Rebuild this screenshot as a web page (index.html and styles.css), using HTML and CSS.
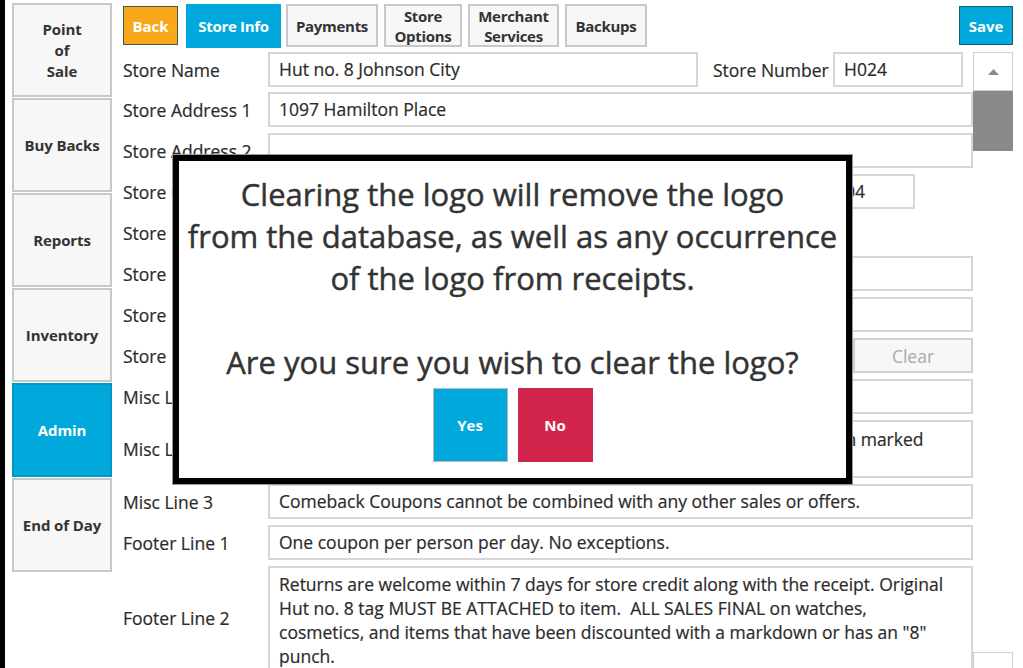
FILE: index.html
```html
<!DOCTYPE html>
<html>
<head>
<meta charset="utf-8">
<link rel="stylesheet" href="styles.css">
</head>
<body>
<div class="app">
  <nav class="sidebar">
    <div class="side-btn">Point<br>of<br>Sale</div>
    <div class="side-btn">Buy Backs</div>
    <div class="side-btn">Reports</div>
    <div class="side-btn">Inventory</div>
    <div class="side-btn active">Admin</div>
    <div class="side-btn">End of Day</div>
  </nav>
  <main class="main">
    <div class="toolbar">
      <div class="btn btn-back">Back</div>
      <div class="tab tab-active t-info">Store Info</div>
      <div class="tab t-pay">Payments</div>
      <div class="tab t-opt">Store<br>Options</div>
      <div class="tab t-merch">Merchant<br>Services</div>
      <div class="tab t-back">Backups</div>
      <div class="spacer"></div>
      <div class="btn btn-save">Save</div>
    </div>
    <div class="content">
      <div class="form">
        <div class="row row-first">
          <div class="label">Store Name</div>
          <div class="input w-name">Hut no. 8 Johnson City</div>
          <div class="label label-inline">Store Number</div>
          <div class="input w-num">H024</div>
        </div>
        <div class="row">
          <div class="label">Store Address 1</div>
          <div class="input grow">1097 Hamilton Place</div>
        </div>
        <div class="row">
          <div class="label">Store Address 2</div>
          <div class="input grow"></div>
        </div>
        <div class="row">
          <div class="label">Store City</div>
          <div class="input w-city">Johnson City</div>
          <div class="input w-zip">37604</div>
        </div>
        <div class="row">
          <div class="label">Store Phone</div>
          <div class="input w-phone">(423) 282-4688</div>
        </div>
        <div class="row">
          <div class="label">Store Email</div>
          <div class="input grow"></div>
        </div>
        <div class="row">
          <div class="label">Store URL</div>
          <div class="input grow"></div>
        </div>
        <div class="row">
          <div class="label">Store Logo</div>
          <div class="input w-logo"></div>
          <div class="btn-clear">Clear</div>
        </div>
        <div class="row">
          <div class="label">Misc Line 1</div>
          <div class="input grow"></div>
        </div>
        <div class="row row-tall">
          <div class="label">Misc Line 2</div>
          <div class="input grow area">Comeback Coupons valid on purchases of $25 on items that have been marked<br>down.</div>
        </div>
        <div class="row">
          <div class="label">Misc Line 3</div>
          <div class="input grow">Comeback Coupons cannot be combined with any other sales or offers.</div>
        </div>
        <div class="row">
          <div class="label">Footer Line 1</div>
          <div class="input grow">One coupon per person per day. No exceptions.</div>
        </div>
        <div class="row row-footer">
          <div class="label">Footer Line 2</div>
          <div class="input grow area area-footer">Returns are welcome within 7 days for store credit along with the receipt. Original<br>Hut no. 8 tag MUST BE ATTACHED to item.&nbsp; ALL SALES FINAL on watches,<br>cosmetics, and items that have been discounted with a markdown or has an "8"<br>punch.</div>
        </div>
      </div>
      <div class="scrollbar">
        <div class="sb-up"><svg width="11" height="6" viewBox="0 0 11 6"><polygon points="0,6 11,6 5.5,0" fill="#8a8a8a"/></svg></div>
        <div class="sb-thumb"></div>
        <div class="sb-track"></div>
        <div class="sb-down"></div>
      </div>
    </div>
  </main>
  <div class="modal">
    <p class="modal-text">Clearing the logo will remove the logo<br>from the database, as well as any occurrence<br>of the logo from receipts.<br><br>Are you sure you wish to clear the logo?</p>
    <div class="modal-actions">
      <div class="mbtn yes">Yes</div>
      <div class="mbtn no">No</div>
    </div>
  </div>
</div>
</body>
</html>
```
FILE: styles.css
```css
* { box-sizing: border-box; }
html, body { margin: 0; padding: 0; background: #fff; }
body {
  font-family: "Open Sans", "Noto Sans", "Liberation Sans", sans-serif;
  color: #2b2b2b;
  width: 1023px;
  height: 668px;
  overflow: hidden;
}
.app {
  position: relative;
  display: flex;
  height: 668px;
  border-left: 5px solid #000;
}
.sidebar {
  display: flex;
  flex-direction: column;
  padding: 3px 0 0 7px;
  width: 118px;
  flex: none;
}
.side-btn {
  width: 100px;
  height: 94px;
  margin-bottom: 1px;
  background: #f7f7f7;
  border: 2px solid #c8c8c8;
  display: flex;
  align-items: center;
  justify-content: center;
  text-align: center;
  font-weight: 700;
  font-size: 15px;
  line-height: 21px;
  color: #333;
  white-space: nowrap;
  letter-spacing: -0.1px;
}
.side-btn.active {
  background: #00a8db;
  border-color: #0097c6;
  color: #fff;
}
.main {
  flex: 1;
  display: flex;
  flex-direction: column;
  padding-right: 10px;
}
.toolbar {
  display: flex;
  align-items: center;
  height: 45px;
  margin-top: 3px;
  gap: 6px;
}
.btn, .tab {
  display: flex;
  align-items: center;
  justify-content: center;
  text-align: center;
  font-weight: 700;
  font-size: 15px;
  line-height: 20px;
  white-space: nowrap;
  flex: none;
}
.btn-back {
  width: 55px;
  height: 39px;
  background: #f9a71b;
  border: 1px solid #3e5d3a;
  color: #fff;
  margin-right: 2px;
}
.btn-save {
  width: 54px;
  height: 39px;
  background: #00a8db;
  border: 1px solid #1c5f6a;
  color: #fff;
}
.tab {
  height: 43px;
  background: #f7f7f7;
  border: 2px solid #c8c8c8;
  color: #333;
  font-size: 15px;
  letter-spacing: -0.3px;
}
.tab-active {
  height: 44px;
  background: #00a8db;
  border-color: #00a8db;
  color: #fff;
  margin-right: -1px;
}
.t-info { width: 95px; }
.t-pay { width: 92px; }
.t-opt { width: 78px; }
.t-merch { width: 91px; }
.t-back { width: 82px; }
.spacer { flex: 1; }
.content {
  display: flex;
  margin-top: 4px;
  flex: 1;
  min-height: 0;
}
.form {
  width: 850px;
  display: flex;
  flex-direction: column;
  gap: 6px;
}
.row {
  display: flex;
  align-items: center;
  height: 35px;
  gap: 10px;
}
.row-first { margin-bottom: -1px; }
.row-tall { height: 58px; }
.row-footer { height: 110px; align-items: flex-start; }
.row-footer .label { align-self: center; margin-top: -6px; }
.label {
  width: 135px;
  flex: none;
  font-size: 17.5px;
  white-space: nowrap;
  color: #2b2b2b;
  -webkit-text-stroke: 0.2px #2b2b2b;
}
.label-inline { width: 110px; margin-left: 5px; }
.input {
  height: 35px;
  border: 2px solid #d6d6d6;
  background: #fff;
  font-size: 17.5px;
  line-height: 24px;
  padding: 3px 9px;
  color: #2b2b2b;
  -webkit-text-stroke: 0.2px #2b2b2b;
  white-space: nowrap;
  overflow: hidden;
  flex: none;
}
.grow { flex: 1; }
.w-name { width: 430px; }
.w-num { width: 130px; }
.w-city { width: 526px; }
.w-zip { width: 111px; }
.w-phone { width: 300px; }
.w-logo { width: 575px; visibility: hidden; }
.area {
  height: 58px;
  align-self: stretch;
  padding-top: 5px;
}
.area-footer {
  height: 110px;
  padding-top: 4px;
}
.btn-clear {
  width: 120px;
  height: 35px;
  border: 2px solid #d0d0d0;
  background: #f7f7f7;
  color: #a9a9a9;
  font-size: 17.5px;
  display: flex;
  align-items: center;
  justify-content: center;
  flex: none;
}
.scrollbar {
  width: 40px;
  display: flex;
  flex-direction: column;
  flex: none;
}
.sb-up {
  height: 39px;
  border: 1px solid #d0d0d0;
  display: flex;
  align-items: center;
  justify-content: center;
}
.sb-thumb {
  height: 60px;
  background: #8a8a8a;
}
.sb-track { flex: 1; }
.sb-down {
  height: 16px;
  border: 1px solid #d0d0d0;
  border-bottom: none;
}
.modal {
  position: absolute;
  left: 168px;
  top: 155px;
  width: 679px;
  height: 329px;
  background: #fff;
  border: 6px solid #000;
  box-shadow: 0 0 0 1px #999;
  display: flex;
  flex-direction: column;
  align-items: center;
  padding-top: 12px;
}
.modal-text {
  margin: 0;
  text-align: center;
  font-size: 31px;
  line-height: 42px;
  color: #333;
  -webkit-text-stroke: 0.45px #333;
  white-space: nowrap;
}
.modal-actions {
  display: flex;
  gap: 10px;
  margin-top: 5px;
}
.mbtn {
  width: 75px;
  height: 74px;
  display: flex;
  align-items: center;
  justify-content: center;
  color: #fff;
  font-weight: 700;
  font-size: 15px;
}
.yes { background: #00a8db; border: 1px solid #b9b9b9; }
.no { background: #d1254c; }
```
